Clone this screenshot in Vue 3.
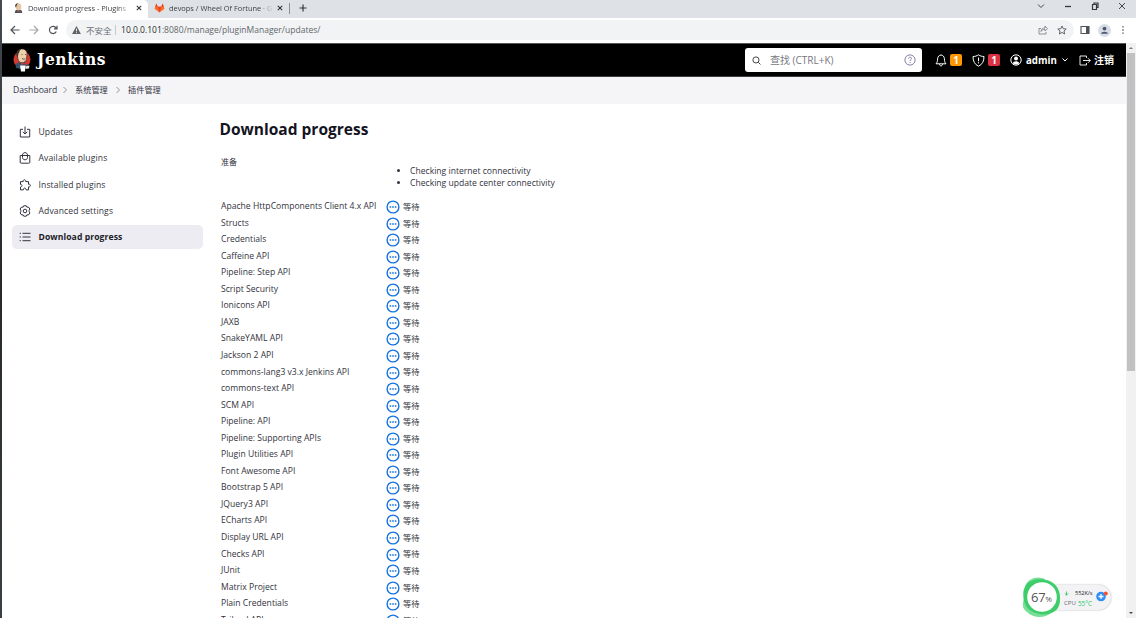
<script setup>
const plugins = [
  'Apache HttpComponents Client 4.x API', 'Structs', 'Credentials', 'Caffeine API',
  'Pipeline: Step API', 'Script Security', 'Ionicons API', 'JAXB', 'SnakeYAML API',
  'Jackson 2 API', 'commons-lang3 v3.x Jenkins API', 'commons-text API', 'SCM API',
  'Pipeline: API', 'Pipeline: Supporting APIs', 'Plugin Utilities API', 'Font Awesome API',
  'Bootstrap 5 API', 'JQuery3 API', 'ECharts API', 'Display URL API', 'Checks API',
  'JUnit', 'Matrix Project', 'Plain Credentials', 'Trilead API'
]
</script>

<template>
  <div class="screen">
    <div class="edge"></div>
    <div class="browser">
      <div class="tabs">
        <div class="tab active">
          <svg class="fav" viewBox="0 0 12 12"><path d="M2 11c0-3 1-4 4-4s4 1 4 4z" fill="#46545e"/><path d="M3 2.500C4 0 8 0 9 2.500v3C8 9 4 9 3 5.500z" fill="#e4c6a4"/><path d="M2.500 4C2 1 4 .3 6 .4 4 1.500 4 3 3.300 5z" fill="#3b3330"/><path d="M4.800 8l1.400 1L8 8v2L6 9.400 4.500 10z" fill="#b5433b"/></svg>
          <span class="tabtext t1">Download progress - Plugins</span>
          <svg class="x" viewBox="0 0 6 6"><path d="M.8.8l4.400 4.400M5.200.8L.8 5.200"/></svg>
        </div>
        <div class="tab second">
          <svg class="fox" viewBox="0 0 12 11"><path d="M6 10.500L.5 6.200 2.500.5l1.600 3.700h3.800L9.500.5l2 5.700z" fill="#fc6d26"/><path d="M6 10.500L4.100 4.200h3.800z" fill="#e24329"/><path d="M2.500.5l1.600 3.700H1.300zM9.500.5l1.200 3.700H7.900z" fill="#e24329"/></svg>
          <span class="tabtext t2">devops / Wheel Of Fortune · G</span>
          <svg class="x" viewBox="0 0 6 6"><path d="M.8.8l4.400 4.400M5.200.8L.8 5.200"/></svg>
        </div>
        <span class="tabsep"></span>
        <svg class="plus" viewBox="0 0 8 8"><path d="M4 .5v7M.5 4h7"/></svg>
        <div class="window">
          <svg viewBox="0 0 8 8"><path d="M1 2.500l3 3 3-3"/></svg>
          <svg viewBox="0 0 8 8"><path d="M1 4.500h6" stroke-width="1.300"/></svg>
          <svg viewBox="0 0 8 8"><path d="M1.500 2.500h4v5h-4zM3 2.500V1h4v4.500H5.500" stroke-width="1.200"/></svg>
          <svg viewBox="0 0 8 8"><path d="M1 1l6 6M7 1L1 7"/></svg>
        </div>
      </div>
      <div class="toolbar">
        <svg class="nav" viewBox="0 0 10 10"><path d="M9.500 5H1M5 1L1 5l4 4"/></svg>
        <svg class="nav pale" viewBox="0 0 10 10"><path d="M.5 5H9M5 1l4 4-4 4"/></svg>
        <svg class="nav" viewBox="0 0 10 10"><path d="M8.300 6.500A3.600 3.600 0 1 1 7.700 2.500L9 3.800M9 .8v3H6" /></svg>
        <div class="address">
          <svg class="warn" viewBox="0 0 10 9"><path d="M5 0l5 9H0z" fill="#5f6368"/><path d="M5 3v3M5 7v1" stroke="#fff"/></svg>
          <span class="unsafe">不安全</span><span class="bar"></span>
          <span class="url"><b>10.0.0.101</b>:8080/manage/pluginManager/updates/</span>
          <svg class="share" viewBox="0 0 10 10"><path d="M3 3.500H1v5.500h7V7M3 6.500c.3-2.500 1.700-3.500 4-3.500V1l2.500 2.700L7 6V4.300C5 4.300 4 5 3 6.500z"/></svg>
          <svg class="star" viewBox="0 0 10 10"><path d="M5 1l1.200 2.700 3 .3-2.200 2 .6 3L5 7.400 2.400 9 3 6 .8 4l3-.3z"/></svg>
        </div>
        <svg class="panel" viewBox="0 0 10 10"><path d="M1 1.500h8v7H1z" fill="none" stroke="#4f5358" stroke-width="1.100"/><path d="M6 1.500h3v7H6z" fill="#4f5358"/></svg>
        <svg class="person" viewBox="0 0 13 13"><circle cx="6.500" cy="6.500" r="6.500" fill="#d9dde5"/><circle cx="6.500" cy="4.600" r="1.900" fill="#4c5870"/><path d="M3 9.700c0-2.700 7-2.700 7 0z" fill="#4c5870"/></svg>
        <svg class="menu" viewBox="0 0 4 10"><path d="M1.300 1.200h1.400v1.400H1.300zM1.300 4.300h1.400v1.400H1.300zM1.300 7.400h1.400v1.400H1.300z" fill="#55595e"/></svg>
      </div>
      <div class="viewport">
        <div class="page">
          <header>
            <svg class="butler" viewBox="0 0 18 24"><ellipse cx="9" cy="11.500" rx="8.500" ry="8.500" fill="#d33833"/><path d="M3 20c-1-4 1-6 6-6s7 2 6 6l-4 1.500z" fill="#34536a"/><path d="M4 6C4 0 13-1 14 5l-.5 6C12 16 6 16 5 11z" fill="#edd0aa" stroke="#2b2623" stroke-width=".6"/><path d="M4.800 9.500C2 6 4 1 8.500.7 6 2.500 7 4 5.500 5.500z" fill="#41372f"/><path d="M8.500 6.500h1M12 6.500h1M9 10.500c1.500 1 2.500.7 3.300 0" stroke="#463a32" stroke-width=".8" fill="none"/><path d="M8 14l3 1.500 3-1.500v3l-3-1-3 1z" fill="#d33833"/><path d="M7 17.500h5.500l-.5 6H8z" fill="#fff"/><path d="M12 18.500l4.500-1-.5 3-3 .3z" fill="#e9e5df"/></svg>
            <span class="brand">Jenkins</span>
            <div class="search">
              <svg class="lens" viewBox="0 0 10 10"><circle cx="4.400" cy="4.400" r="3.400"/><path d="M7 7l2.400 2.400"/></svg>
              <span class="hint">查找 (CTRL+K)</span>
              <svg class="help" viewBox="0 0 12 12"><circle cx="6" cy="6" r="5.100"/><path d="M4.600 4.700c0-2 3-1.900 2.900-.1C7.500 5.700 6 5.600 6 7M6 8v1"/></svg>
            </div>
            <svg class="bell" viewBox="0 0 12 13"><path d="M1 9.800c1.300-1.300 1.500-2.800 1.600-5C2.700 2.600 4.200 1 6 1s3.300 1.600 3.400 3.800c.1 2.200.3 3.700 1.600 5zM4.500 10c0 2.500 3 2.500 3 0"/></svg>
            <span class="badge orange">1</span>
            <svg class="shield" viewBox="0 0 13 13"><path d="M6.500.8c1.700 1.200 3.400 1.700 5.500 1.700 0 5-1.800 8-5.500 9.700C2.800 10.500 1 7.500 1 2.500c2.100 0 3.800-.5 5.500-1.700zM6.500 3.500v3.700M6.500 8.200v1.200"/></svg>
            <span class="badge red">1</span>
            <svg class="user" viewBox="0 0 12 12"><circle cx="6" cy="6" r="5.200" fill="none" stroke="#fff"/><circle cx="6" cy="4.600" r="2" fill="#fff"/><path d="M2.600 9.300C3.500 6.500 8.500 6.500 9.400 9.300 7.500 11 4.500 11 2.600 9.300z" fill="#fff"/></svg>
            <span class="admin">admin</span>
            <svg class="down" viewBox="0 0 8 6"><path d="M1.500 1.500L4 4l2.500-2.500"/></svg>
            <svg class="exit" viewBox="0 0 12 11"><path d="M7.500 3V1H1v9h6.500V8M4 5.500h7.300M9 3.200l2.300 2.300L9 7.800"/></svg>
            <span class="logout">注销</span>
          </header>
          <nav class="crumbs">
            <span class="c1">Dashboard</span><svg viewBox="0 0 6 8"><path d="M1.500 1l3 3-3 3"/></svg>
            <span class="cn">系统管理</span><svg viewBox="0 0 6 8"><path d="M1.500 1l3 3-3 3"/></svg>
            <span class="cn">插件管理</span>
          </nav>
          <div class="body">
            <aside>
              <div class="item"><svg viewBox="0 0 12 12"><path d="M4 3.300H1.300V11h9.400V3.300H8M6 .5V8M3.800 5.800L6 8l2.200-2.200"/></svg><span class="wide">Updates</span></div>
              <div class="item"><svg viewBox="0 0 12 12"><path d="M1.200 3.500h9.600v6.700q0 1-1 1H2.200q-1 0-1-1zM3.500 5.500V3.200c0-3.400 5-3.400 5 0v2.300c0 3-5 3-5 0"/></svg><span class="wide">Available plugins</span></div>
              <div class="item"><svg viewBox="0 0 12 12"><path d="M1.500 2.600h2.700c-.7-2.500 3-2.500 2.500 0h2.800v2.700c2.500-.7 2.500 3 0 2.600v3H7c.2-2.400-2.800-2.400-2.600 0H1.500V8c2-.2 2-2.800 0-2.600z"/></svg><span class="wide">Installed plugins</span></div>
              <div class="item"><svg viewBox="0 0 12 12"><path d="M4.700.8h2.600l.6 1.400 1.500-.2 1.500 2-.7 1.400v1.200l.7 1.400-1.500 2-1.500-.2-.6 1.400H4.700l-.6-1.400-1.500.2-1.500-2 .7-1.400V5.400L1.100 4l1.500-2 1.500.2z"/><circle cx="6" cy="6" r="1.800"/></svg><span class="wide">Advanced settings</span></div>
              <div class="item selected"><svg viewBox="0 0 12 12"><path d="M3.500 2.300h8M3.500 6h8M3.500 9.700h8M.7 2.300h1.200M.7 6h1.200M.7 9.700h1.200"/></svg><span>Download progress</span></div>
            </aside>
            <main>
              <h1>Download progress</h1>
              <div class="prepare">
                <span class="prep">准备</span>
                <ul><li>Checking internet connectivity</li><li>Checking update center connectivity</li></ul>
              </div>
              <div v-for="name in plugins" :key="name" class="row">
                <span class="name">{{ name }}</span>
                <svg viewBox="0 0 14 14"><circle cx="7" cy="7" r="5.900" fill="none" stroke="#1672df" stroke-width="1.400"/><path d="M3.600 6.200h1.600v1.600H3.600zM6.200 6.200h1.600v1.600h-1.600zM8.800 6.200h1.600v1.600H8.800z" fill="#1672df"/></svg>
                <span class="wait">等待</span>
              </div>
            </main>
          </div>
        </div>
        <div class="scroll">
          <svg viewBox="0 0 10 10"><path d="M3 6l2-2 2 2z" fill="#777"/></svg>
          <div class="thumb"></div>
          <svg viewBox="0 0 10 10"><path d="M3 4l2 2 2-2z" fill="#444"/></svg>
        </div>
      </div>
    </div>
    <div class="monitor">
      <div class="stats">
        <div class="line"><svg viewBox="0 0 6 6"><path d="M3 .5V5M1 3l2 2 2-2" fill="none" stroke="#25c65b"/></svg><span class="speed">552K/s</span></div>
        <div class="line"><span class="cpu">CPU</span><span class="temp">55°C</span></div>
      </div>
      <svg class="add" viewBox="0 0 14 14"><circle cx="6" cy="7.500" r="4.800" fill="#2f8ff5"/><path d="M6 5v5M3.500 7.500h5" stroke="#fff" stroke-width="1.300"/><circle cx="10.800" cy="4.600" r="2" fill="#f4522f"/></svg>
      <svg class="ring" viewBox="0 0 40 42"><path d="M3 11C5 2 17-1 24 4c8 1 12 7 13 15 3 9-1 16-8 18-7 6-18 5-24-1C-1 32 1 27 2 22c-1-5-1-8 1-11z" fill="#79df98"/><path d="M4 9C10 1 25 2 32 8c8 6 7 19 3 25-5 6-16 7-24 3C1 32-1 18 4 9z" fill="#3dce6b"/><circle cx="20" cy="21" r="14.800" fill="#fff"/></svg>
      <span class="pct">67<small>%</small></span>
    </div>
  </div>
</template>

<style>
html, body { margin: 0; overflow: hidden; background: #fff; }
</style>
<style scoped>
* { box-sizing: border-box; }
svg { display: block; flex: none; fill: none; }
span { white-space: nowrap; }
.screen { position: relative; display: flex; width: 1136px; height: 618px; overflow: hidden; font-family: "Open Sans", "Noto Sans CJK SC", sans-serif; font-size: 8.600px; color: #333340; background: #fff; }
.edge { width: 2px; background: linear-gradient(#454b51, #25292c 45%, #3a3f43); }
.browser { flex: 1; min-width: 0; display: flex; flex-direction: column; }
.tabs { height: 18px; flex: none; background: #dee1e6; display: flex; align-items: center; }
.tab { height: 18px; display: flex; align-items: center; padding-bottom: 2px; }
.active { width: 146px; background: #fff; padding-left: 11px; border-radius: 0 5px 0 0; }
.second { width: 139px; padding-left: 6px; }
.fav { width: 11px; height: 11px; margin-right: 4px; }
.fox { width: 11px; height: 10px; margin-right: 4px; }
.tabtext { font-size: 7.400px; overflow: hidden; -webkit-mask-image: linear-gradient(90deg, #000 88%, transparent); mask-image: linear-gradient(90deg, #000 88%, transparent); color: #3c3f44; }
.t1 { width: 102px; margin-right: 6px; }
.t2 { width: 104px; margin-right: 4px; }
.x { width: 6px; height: 6px; stroke: #33363a; stroke-width: 1.100; }
.tabsep { width: 1px; height: 11px; background: #8c9095; margin: 0 9px 2px 2px; }
.plus { width: 8px; height: 8px; stroke: #33363a; stroke-width: 1.200; margin-bottom: 2px; }
.window { margin-left: auto; display: flex; gap: 19px; padding: 0 10px 6px 0; }
.window svg { width: 8px; height: 8px; stroke: #33363a; stroke-width: .9; }
.toolbar { height: 25px; flex: none; display: flex; align-items: center; background: #fff; padding: 0 0 1px 8px; }
.nav { width: 10px; height: 10px; margin-right: 9px; stroke: #505459; stroke-width: 1.200; }
.nav.pale { stroke: #a5a8ac; }
.address { width: 1008px; height: 20px; border-radius: 10px; background: #f1f3f4; display: flex; align-items: center; padding: 0 7px 0 6px; margin-left: -1px; }
.warn { width: 9px; height: 8px; }
.unsafe { margin-left: 5px; width: 26px; font-size: 8.500px; color: #6b6f73; }
.bar { width: 1px; height: 10px; background: #c7cacd; margin: 0 5px 0 3px; }
.url { font-size: 8.540px; color: #63676c; }
.url b { font-weight: 400; color: #292b2f; }
.share { width: 10px; height: 10px; margin-left: auto; stroke: #74787c; stroke-width: .8; }
.star { width: 10px; height: 10px; margin-left: 9px; stroke: #55595e; stroke-width: .9; }
.panel { width: 10px; height: 10px; margin-left: 6px; }
.person { width: 13px; height: 13px; margin-left: 8px; }
.menu { width: 4px; height: 10px; margin-left: 10px; }
.viewport { flex: 1; min-height: 0; display: flex; }
.page { width: 1124px; overflow: hidden; }
header { height: 34px; background: #000; border-top: 1px solid #55575a; border-bottom: 1px solid #3c3c3e; display: flex; align-items: center; color: #fff; padding-left: 11px; }
.butler { width: 18px; height: 24px; }
.brand { font: bold 17.200px/20px "DejaVu Serif Condensed", "DejaVu Serif", serif; font-stretch: condensed; letter-spacing: .6px; margin: -2px 0 0 6px; }
.search { margin-left: auto; width: 177px; height: 24px; border-radius: 3px; background: #fff; display: flex; align-items: center; color: #77777f; font-size: 10px; padding: 0 6px 0 7px; }
.hint { margin-top: -1px; }
.lens { width: 9px; height: 9px; stroke: #333; margin-right: 9px; }
.help { width: 12px; height: 12px; margin-left: auto; stroke: #73739b; stroke-width: .9; }
.bell { width: 12px; height: 13px; stroke: #fff; margin-left: 13px; }
.badge { width: 12px; height: 12px; border-radius: 2px; text-align: center; font-weight: 700; font-size: 10px; line-height: 12px; }
.orange { background: #fe9700; margin-left: 3px; }
.red { background: #dc3045; margin-left: 3px; }
.shield { width: 13px; height: 13px; stroke: #fff; margin-left: 10px; }
.user { width: 12px; height: 12px; margin-left: 10px; }
.admin { font-size: 9.700px; font-weight: 700; margin-left: 4px; width: 31px; }
.down { width: 8px; height: 6px; stroke: #fff; margin-left: 4px; }
.exit { width: 12px; height: 11px; stroke: #fff; stroke-width: .9; margin-left: 10px; }
.logout { font-size: 10px; font-weight: 700; margin: -2px 12px 0 3px; }
.crumbs { height: 27px; background: #f5f5f8; display: flex; align-items: center; padding: 0 0 1px 11px; color: #34343f; }
.crumbs svg { width: 6px; height: 8px; stroke: #888890; stroke-width: .9; margin: 0 7px 0 7px; }
.cn { font-size: 8.200px; width: 33px; line-height: 12px; margin-top: -1px; }
.c1 { width: 42px; }
.body { display: flex; height: 514px; overflow: hidden; }
aside { width: 201px; margin-left: 10px; padding-top: 16px; display: flex; flex-direction: column; gap: 2.300px; flex: none; }
.item { height: 24px; display: flex; align-items: center; padding-left: 7px; border-radius: 5px; }
.item svg { width: 12px; height: 12px; stroke: #333340; stroke-width: 1; margin-right: 7.500px; }
.wide { letter-spacing: .11px; }
.selected { width: 191px; background: #ececf2; font-weight: 700; color: #1c1c28; }
.selected span { letter-spacing: .08px; }
main { width: 600px; padding: 15px 0 0 7px; }
h1 { margin: 0 0 0 -.5px; font-size: 15.500px; line-height: 20px; font-weight: 700; color: #14141f; }
.prepare { height: 44.500px; margin-top: 15px; padding-left: 1px; display: flex; }
.prep { width: 166px; font-size: 8px; line-height: 16px; }
ul { margin: 10.500px 0 0; padding: 0 0 0 23px; line-height: 12.500px; }
.row { height: 16.550px; display: flex; align-items: center; padding-left: 1px; }
.name { width: 167px; line-height: 13px; margin-top: -.4px; }
.row svg { width: 14px; height: 14px; margin: .6px 2.600px 0 -1.600px; }
.wait { font-size: 8.300px; line-height: 13px; margin-top: -.6px; }
.scroll { width: 10px; background: #f1f1f1; display: flex; flex-direction: column; }
.scroll svg { width: 10px; height: 10px; }
.thumb { height: 318px; width: 8px; margin: 0 1px auto; background: #c1c1c1; }
.monitor { position: absolute; left: 1022px; top: 576px; width: 90px; height: 42px; }
.stats { position: absolute; left: 20px; top: 9px; width: 69px; height: 25px; border-radius: 13px; background: #f3f3f5; box-shadow: 0 0 2px #aaa; padding: 3px 0 0 22px; }
.line { display: flex; align-items: center; height: 10px; font-size: 6.300px; }
.line svg { width: 5px; height: 5px; margin-right: 6px; }
.speed { font-size: 5.700px; letter-spacing: -.1px; color: #222; }
.cpu { width: 14px; font-size: 6px; color: #667; }
.temp { color: #1bc967; }
.add { position: absolute; left: 73px; top: 13px; width: 14px; height: 14px; }
.ring { position: absolute; left: 0; top: 0; width: 40px; height: 42px; }
.pct { position: absolute; left: 9px; top: 12px; font-size: 13px; line-height: 18px; color: #555; letter-spacing: -.3px; }
.pct small { font-size: 8px; }
</style>
